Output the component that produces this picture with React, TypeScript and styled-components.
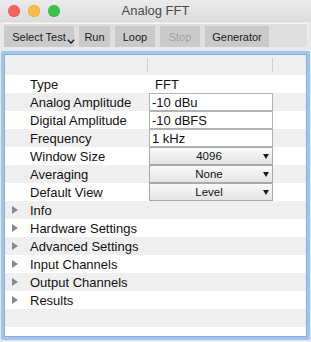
import React, { ReactElement } from 'react';
import styled, { createGlobalStyle } from 'styled-components';

const GlobalStyle = createGlobalStyle`
  html, body {
    margin: 0;
    padding: 0;
    background: #e9e9e9;
  }
  body {
    font-family: "Liberation Sans", Arial, sans-serif;
  }
`;

type FieldRow =
  | { kind: 'text'; label: string; value: string }
  | { kind: 'input'; label: string; value: string }
  | { kind: 'select'; label: string; value: string }
  | { kind: 'group'; label: string };

const rows: FieldRow[] = [
  { kind: 'text', label: 'Type', value: 'FFT' },
  { kind: 'input', label: 'Analog Amplitude', value: '-10 dBu' },
  { kind: 'input', label: 'Digital Amplitude', value: '-10 dBFS' },
  { kind: 'input', label: 'Frequency', value: '1 kHz' },
  { kind: 'select', label: 'Window Size', value: '4096' },
  { kind: 'select', label: 'Averaging', value: 'None' },
  { kind: 'select', label: 'Default View', value: 'Level' },
  { kind: 'group', label: 'Info' },
  { kind: 'group', label: 'Hardware Settings' },
  { kind: 'group', label: 'Advanced Settings' },
  { kind: 'group', label: 'Input Channels' },
  { kind: 'group', label: 'Output Channels' },
  { kind: 'group', label: 'Results' },
];

const toolButtons = [
  { label: 'Select Test', width: 70, menu: true },
  { label: 'Run', width: 31 },
  { label: 'Loop', width: 40 },
  { label: 'Stop', width: 40, disabled: true },
  { label: 'Generator', width: 64 },
];

const App = (): ReactElement => (
  <>
    <GlobalStyle />
    <Window>
      <TitleBar>
        <Lights>
          <Light color="#fc605c" />
          <Light color="#fdbc40" />
          <Light color="#34c84a" />
        </Lights>
        <Title>Analog FFT</Title>
        <span />
      </TitleBar>

      <Toolbar>
        {toolButtons.map((b) => (
          <ToolButton key={b.label} $width={b.width} $disabled={b.disabled}>
            {b.label}
            {b.menu && (
              <MenuChevron width="8" height="5" viewBox="0 0 8 5">
                <polyline points="0.8,0.8 4,4 7.2,0.8" fill="none" stroke="#1a1a1a" strokeWidth="1.3" />
              </MenuChevron>
            )}
          </ToolButton>
        ))}
      </Toolbar>

      <Panel>
        <Table>
          <HeaderRow>
            <HeaderCell />
            <HeaderCell />
            <HeaderCell />
          </HeaderRow>

          {rows.map((row, i) => (
            <Row key={row.label} $alt={i % 2 === 1}>
              {row.kind === 'group' ? (
                <GroupLabel>
                  <Disclosure />
                  {row.label}
                </GroupLabel>
              ) : (
                <Label>{row.label}</Label>
              )}
              <ValueCell>
                {row.kind === 'text' && <PlainValue>{row.value}</PlainValue>}
                {row.kind === 'input' && <TextBox>{row.value}</TextBox>}
                {row.kind === 'select' && (
                  <SelectBox>
                    <span>{row.value}</span>
                    <SelectArrow />
                  </SelectBox>
                )}
              </ValueCell>
              <span />
            </Row>
          ))}

          <Row $alt>
            <span />
          </Row>
        </Table>
      </Panel>
    </Window>
  </>
);

// window chrome
const Window = styled.div`
  width: 311px;
  height: 342px;
  display: flex;
  flex-direction: column;
  background: #e9e9e9;
  overflow: hidden;
`;

const TitleBar = styled.div`
  height: 22px;
  display: grid;
  grid-template-columns: 1fr auto 1fr;
  align-items: center;
  background: linear-gradient(#ebebeb, #dcdcdc);
`;

const Lights = styled.div`
  display: flex;
  gap: 8px;
  padding-left: 8px;
`;

const Light = styled.div<{ color: string }>`
  width: 12px;
  height: 12px;
  border-radius: 50%;
  background: ${({ color }) => color};
  box-shadow: inset 0 0 0 0.5px rgba(0, 0, 0, 0.15);
`;

const Title = styled.div`
  font-size: 13px;
  color: #4a4a4a;
  line-height: 22px;
`;

// toolbar
const Toolbar = styled.div`
  height: 24px;
  margin: 1px 4px 0 4px;
  padding: 2px 0 1px;
  box-sizing: border-box;
  display: flex;
  gap: 5px;
  background: #dedede;
  border-top: 1px solid #f6f6f6;
`;

const ToolButton = styled.div<{ $width: number; $disabled?: boolean }>`
  position: relative;
  width: ${({ $width }) => $width}px;
  height: 21px;
  display: flex;
  align-items: center;
  justify-content: center;
  background: #cacaca;
  font-size: 11px;
  color: ${({ $disabled }) => ($disabled ? '#a3a3a3' : '#1a1a1a')};
`;

const MenuChevron = styled.svg`
  position: absolute;
  left: 63px;
  bottom: 3px;
`;

// table
const Panel = styled.div`
  margin: 4px 1px 2px 1px;
  flex: 1;
  display: flex;
  border: 3px solid #9fc4f2;
  border-radius: 2px;
`;

const Table = styled.div`
  flex: 1;
  display: flex;
  flex-direction: column;
  background: #ffffff;
  border: 1px solid #86b0e6;
`;

const HeaderRow = styled.div`
  height: 20px;
  display: grid;
  grid-template-columns: 143px 125px 1fr;
  background: #efefef;
`;

const HeaderCell = styled.div`
  border-right: 1px solid #cfcfcf;
  margin: 3px 0;

  &:last-child {
    border-right: none;
  }
`;

const Row = styled.div<{ $alt?: boolean }>`
  height: 18px;
  display: grid;
  grid-template-columns: 143px 125px 1fr;
  align-items: center;
  background: ${({ $alt }) => ($alt ? '#efefef' : '#ffffff')};
  font-size: 13px;
  color: #111;
`;

const Label = styled.div`
  padding-left: 25px;
  white-space: nowrap;
`;

const GroupLabel = styled.div`
  display: flex;
  align-items: center;
  padding-left: 7px;
  white-space: nowrap;
`;

const Disclosure = styled.span`
  width: 0;
  height: 0;
  margin-right: 12px;
  border-left: 6px solid #8a8a8a;
  border-top: 4px solid transparent;
  border-bottom: 4px solid transparent;
`;

const ValueCell = styled.div`
  height: 18px;
  display: flex;
  align-items: stretch;
`;

const PlainValue = styled.div`
  padding-left: 7px;
  display: flex;
  align-items: center;
`;

const TextBox = styled.div`
  flex: 1;
  margin-left: 1px;
  padding-left: 2px;
  display: flex;
  align-items: center;
  background: #ffffff;
  border: 1px solid #b3b3b3;
  box-sizing: border-box;
`;

const SelectBox = styled.div`
  flex: 1;
  position: relative;
  margin-left: 1px;
  display: flex;
  align-items: center;
  justify-content: center;
  background: linear-gradient(#f9f9f9, #e4e4e4);
  border: 1px solid #a9a9a9;
  box-sizing: border-box;
  font-size: 11.5px;
  padding-right: 4px;
`;

const SelectArrow = styled.span`
  position: absolute;
  right: 3px;
  top: 6px;
  width: 0;
  height: 0;
  border-top: 5px solid #1a1a1a;
  border-left: 3.5px solid transparent;
  border-right: 3.5px solid transparent;
`;

export default App;
